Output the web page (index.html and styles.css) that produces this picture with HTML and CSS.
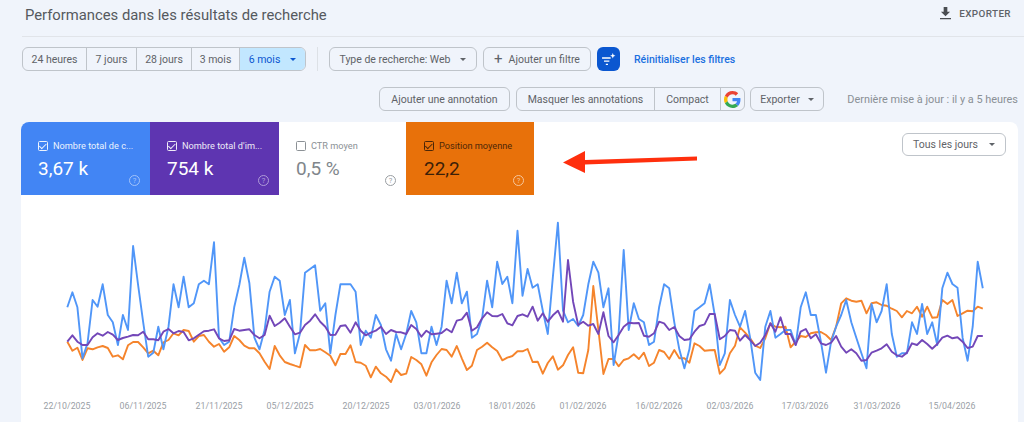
FILE: index.html
```html
<!DOCTYPE html>
<html lang="fr">
<head>
    <meta charset="UTF-8">
    <title>Performances dans les résultats de recherche</title>
    <link rel="stylesheet" href="styles.css">
</head>
<body>

    <div class="header">
        <div class="title">Performances dans les résultats de recherche</div>
        <div class="export-link">
            <svg class="export-icon" viewBox="0 0 12 14"><path d="M4 0h4v5h3L6 10 1 5h3zM0 12h12v1.4H0z"/></svg>
            EXPORTER
        </div>
    </div>

    <div class="filter-row">
        <div class="segmented">
            <div class="segment seg-24h">24 heures</div>
            <div class="segment seg-7j">7 jours</div>
            <div class="segment seg-28j">28 jours</div>
            <div class="segment seg-3m">3 mois</div>
            <div class="segment seg-6m active">6 mois <span class="caret"></span></div>
        </div>
        <div class="divider"></div>
        <div class="btn btn-type">Type de recherche: Web <span class="caret"></span></div>
        <div class="btn btn-add"><span class="plus">+</span> Ajouter un filtre</div>
        <div class="filter-icon-btn">
            <svg viewBox="0 0 14 14" width="15" height="15">
                <path d="M1 5h8v1.2H1zM2.8 8h5v1.2h-5zM4.5 11h2v1.2h-2z" fill="#fff"/>
                <path d="M11 1l.7 1.8 1.8.7-1.8.7-.7 1.8-.7-1.8-1.8-.7 1.8-.7z" fill="#fff"/>
            </svg>
        </div>
        <a class="reset-link">Réinitialiser les filtres</a>
    </div>

    <div class="annotation-row">
        <div class="btn btn-annotate">Ajouter une annotation</div>
        <div class="segmented">
            <div class="segment seg-hide">Masquer les annotations</div>
            <div class="segment seg-compact">Compact</div>
            <div class="segment seg-google">
                <svg viewBox="0 0 48 48" width="17" height="17">
                    <path fill="#EA4335" d="M24 9.5c3.5 0 6.7 1.2 9.2 3.6l6.9-6.9C35.9 2.4 30.5 0 24 0 14.6 0 6.5 5.4 2.6 13.2l8 6.2C12.5 13.6 17.800 9.500 24 9.500z"/>
                    <path fill="#4285F4" d="M46.500 24.500c0-1.600-.1-3.100-.4-4.500H24v9h12.700c-.5 2.900-2.200 5.400-4.700 7l7.700 6c4.500-4.200 6.800-10.300 6.800-17.500z"/>
                    <path fill="#FBBC05" d="M10.500 28.600c-.5-1.400-.8-3-.8-4.600s.3-3.200.8-4.600l-8-6.200C.9 16.500 0 20.100 0 24s.9 7.500 2.600 10.800z"/>
                    <path fill="#34A853" d="M24 48c6.500 0 11.900-2.100 15.900-5.800l-7.700-6c-2.200 1.400-4.900 2.300-8.200 2.300-6.200 0-11.500-4.200-13.400-9.800l-8 6.200C6.500 42.600 14.600 48 24 48z"/>
                </svg>
            </div>
        </div>
        <div class="btn btn-export">Exporter <span class="caret"></span></div>
        <div class="last-update">Dernière mise à jour : il y a 5 heures</div>
    </div>

    <div class="card">
        <div class="metrics-row">
            <div class="tile tile-blue">
                <div class="tile-label"><span class="checkbox checked"></span>Nombre total de c...</div>
                <div class="tile-value">3,67 k</div>
                <span class="help">?</span>
            </div>
            <div class="tile tile-purple">
                <div class="tile-label"><span class="checkbox checked"></span>Nombre total d'im...</div>
                <div class="tile-value">754 k</div>
                <span class="help">?</span>
            </div>
            <div class="tile tile-white">
                <div class="tile-label"><span class="checkbox"></span>CTR moyen</div>
                <div class="tile-value">0,5 %</div>
                <span class="help">?</span>
            </div>
            <div class="tile tile-orange">
                <div class="tile-label"><span class="checkbox checked"></span>Position moyenne</div>
                <div class="tile-value">22,2</div>
                <span class="help">?</span>
            </div>
            <svg class="arrow" viewBox="0 0 135 24" width="135" height="24">
                <path d="M0 12.500L22 1v9l112-3.500v4L22 14.500V23z" fill="#ff2f0d"/>
            </svg>
            <div class="btn btn-days">Tous les jours <span class="caret"></span></div>
        </div>

        <div class="chart">
            <svg id="chart" width="997" height="227" viewBox="0 0 997 227">
                <g class="tick-labels">
                    <text x="46" y="214">22/10/2025</text>
                    <text x="122" y="214">06/11/2025</text>
                    <text x="198" y="214">21/11/2025</text>
                    <text x="269" y="214">05/12/2025</text>
                    <text x="345" y="214">20/12/2025</text>
                    <text x="416" y="214">03/01/2026</text>
                    <text x="491" y="214">18/01/2026</text>
                    <text x="562" y="214">01/02/2026</text>
                    <text x="638" y="214">16/02/2026</text>
                    <text x="709" y="214">02/03/2026</text>
                    <text x="784" y="214">17/03/2026</text>
                    <text x="856" y="214">31/03/2026</text>
                    <text x="931" y="214">15/04/2026</text>
                </g>
            </svg>
        </div>
    </div>

    <script src="chart.js"></script>
</body>
</html>
```

FILE: styles.css
```css
* {
    box-sizing: border-box;
}
body {
    margin: 0;
    height: 422px;
    overflow: hidden;
    background-color: #f0f4fb;
    font-family: Roboto, "Liberation Sans", sans-serif;
    color: #5f6368;
}
.header {
    display: flex;
    justify-content: space-between;
    align-items: center;
    height: 37px;
    margin-left: 22px;
    padding: 0 13px 7px 3px;
    border-bottom: 1px solid #e1e4e9;
}
.title {
    font-size: 14.8px;
    color: #55595e;
}
.export-link {
    display: flex;
    align-items: center;
    gap: 8px;
    margin-top: -2px;
    font-size: 9.9px;
    font-weight: 500;
    letter-spacing: 0.4px;
}
.export-icon {
    width: 11px;
    height: 13px;
    fill: #4a4d51;
}
.filter-row {
    display: flex;
    align-items: center;
    height: 24px;
    margin: 10px 0 0 22px;
}
.annotation-row {
    display: flex;
    align-items: center;
    height: 24px;
    margin: 16px 6px 0 379px;
}
.segmented {
    display: flex;
    height: 24px;
    border: 1px solid #bfc4ca;
    border-radius: 6px;
    overflow: hidden;
    font-size: 10.5px;
}
.segment {
    display: flex;
    align-items: center;
    justify-content: center;
    gap: 7px;
    border-left: 1px solid #bfc4ca;
}
.segment:first-child {
    border-left: none;
}
.seg-24h { width: 63px; }
.seg-7j { width: 50px; }
.seg-28j { width: 55px; }
.seg-3m { width: 48px; }
.seg-6m { width: 66px; }
.seg-hide { width: 137px; }
.seg-compact { width: 66px; }
.seg-google { width: 24px; }
.active {
    background-color: #c2e7ff;
    color: #0b57d0;
}
.caret {
    display: inline-block;
    width: 0;
    height: 0;
    margin-left: 3px;
    border-left: 3px solid transparent;
    border-right: 3px solid transparent;
    border-top: 3px solid currentColor;
}
.divider {
    width: 1px;
    height: 24px;
    margin: 0 11px;
    background-color: #dde1e6;
}
.btn {
    display: flex;
    align-items: center;
    justify-content: center;
    height: 24px;
    border: 1px solid #bfc4ca;
    border-radius: 6px;
    font-size: 10.5px;
    gap: 5px;
}
.btn-type {
    width: 148px;
    gap: 7px;
}
.btn-add {
    width: 108px;
    margin-left: 6px;
    gap: 6px;
}
.plus {
    font-size: 15px;
    line-height: 1;
}
.filter-icon-btn {
    display: flex;
    align-items: center;
    justify-content: center;
    width: 23px;
    height: 24px;
    margin-left: 6px;
    border-radius: 6px;
    background-color: #0b57d0;
}
.reset-link {
    margin-left: 14px;
    font-size: 10.5px;
    font-weight: 500;
    color: #1a6fe0;
}
.btn-annotate {
    width: 131px;
    margin-right: 6px;
}
.btn-export {
    width: 74px;
    margin-left: 5px;
}
.last-update {
    margin-left: auto;
    font-size: 10.9px;
    color: #8a9096;
}
.card {
    height: 300px;
    margin: 11px 6px 0 21px;
    border-radius: 8px 8px 0 0;
    background-color: #fff;
}
.metrics-row {
    display: flex;
    align-items: flex-start;
    height: 73px;
}
.tile {
    position: relative;
    width: 128px;
    height: 73px;
    padding: 18px 0 0 17px;
}
.tile-blue {
    width: 129px;
    border-radius: 8px 0 0 0;
    background-color: #4285f4;
    color: #fff;
}
.tile-purple {
    width: 129px;
    background-color: #5e35b1;
    color: #fff;
}
.tile-white {
    width: 127px;
    color: #80868b;
}
.tile-orange {
    padding-left: 18px;
    background-color: #e8710a;
    color: #3c2008;
}
.tile-label {
    display: flex;
    align-items: center;
    gap: 5px;
    font-size: 9.2px;
    opacity: 0.9;
}
.tile-value {
    margin-top: 6px;
    font-size: 19px;
    line-height: 24px;
}
.checkbox {
    display: inline-block;
    position: relative;
    width: 10px;
    height: 10px;
    border: 1px solid currentColor;
    border-radius: 1.5px;
}
.checkbox.checked::after {
    content: "";
    position: absolute;
    left: 2px;
    top: 0.5px;
    width: 3px;
    height: 5.5px;
    border-right: 1px solid currentColor;
    border-bottom: 1px solid currentColor;
    transform: rotate(45deg);
}
.help {
    position: absolute;
    right: 10px;
    bottom: 9px;
    display: flex;
    align-items: center;
    justify-content: center;
    width: 11px;
    height: 11px;
    border: 1px solid currentColor;
    border-radius: 50%;
    font-size: 7.5px;
    opacity: 0.5;
}
.tile-white .help {
    opacity: 0.8;
}
.tile-orange .help {
    border-color: #f7c79c;
    color: #f7c79c;
    opacity: 1;
}
.arrow {
    flex: none;
    margin: 28px 0 0 29px;
}
.btn-days {
    width: 104px;
    height: 23px;
    margin: 11px 12px 0 auto;
    gap: 8px;
}
.chart {
    height: 227px;
}
.chart svg {
    display: block;
}
.tick-labels text {
    font-size: 8.8px;
    fill: #9aa0a6;
    text-anchor: middle;
}
.series {
    fill: none;
    stroke-width: 1.9;
    stroke-linejoin: round;
}
```

FILE: chart.js
```js
// y values are read off the chart at 3x scale, one per day
const blue = [292,247,292,445,400,270,290,223,315,337,405,315,360,108,225,337,440,428,350,418,350,223,292,200,292,280,223,212,223,97,383,405,395,292,225,143,220,383,418,360,245,200,212,315,270,430,370,188,177,166,302,280,430,315,
    223,223,223,245,405,362,383,315,345,418,452,372,418,372,303,337,430,430,350,405,350,212,280,188,280,245,383,372,325,212,292,155,222,200,280,62,257,177,233,223,302,372,200,38,302,337,327,348,315,223,155,188,292,235,465,372,120,360,280,327,337,405,395,292,223,235,337,
    418,475,418,303,292,280,223,315,465,430,270,315,350,303,383,488,510,350,303,383,372,360,360,405,292,247,315,315,395,488,395,350,315,270,337,383,430,475,282,337,303,223,372,440,430,430,337,372,282,372,337,405,235,188,222,233,383,452,350,155,235];

const purple = [395,376,395,405,405,382,370,377,366,374,390,384,380,375,376,365,388,388,391,365,357,370,363,366,391,385,374,364,362,358,385,393,391,357,362,360,358,375,385,375,317,348,338,325,350,373,368,345,332,313,335,350,375,374,
    348,346,368,337,362,376,368,362,350,372,360,366,367,372,345,357,380,362,373,371,369,357,367,332,328,308,362,352,325,307,318,319,312,340,346,318,313,320,290,332,310,335,316,302,335,150,275,345,335,347,342,372,307,378,397,375,350,338,340,339,377,380,370,335,340,360,351,
    378,390,388,365,348,343,312,312,388,378,360,362,392,375,390,408,398,375,340,365,322,372,372,405,365,357,385,373,400,405,398,378,410,428,418,430,452,450,428,422,415,403,425,436,440,428,400,405,390,402,416,402,383,377,385,382,395,414,410,378,378];

const orange = [395,422,413,450,415,418,412,408,414,440,436,448,406,396,396,412,430,422,436,397,390,370,376,360,363,395,378,375,395,410,402,425,412,378,390,407,415,415,430,455,477,408,436,456,462,467,472,405,421,421,417,427,437,466,
    432,432,406,456,458,467,502,470,490,500,516,478,495,491,441,450,463,497,457,435,417,420,440,408,445,480,467,420,410,398,412,423,451,443,438,424,424,417,456,455,491,459,439,479,466,435,412,488,490,420,228,360,492,447,447,469,450,445,433,447,428,468,458,420,426,447,420,
    445,445,458,400,408,422,421,420,491,475,430,407,352,368,385,407,414,385,340,350,352,350,412,395,378,381,370,367,366,375,390,350,280,265,272,275,272,310,280,277,285,287,296,303,322,303,310,290,320,290,323,322,270,282,270,318,310,302,304,290,296];

function drawSeries(values, color) {
    const svg = document.getElementById('chart');
    const line = document.createElementNS('http://www.w3.org/2000/svg', 'polyline');
    const points = values.map((v, i) => {
        const x = 46.3 + i * 5.058;
        const y = 15 + v / 3;
        return x.toFixed(1) + ',' + y.toFixed(1);
    });
    line.setAttribute('points', points.join(' '));
    line.setAttribute('class', 'series');
    line.setAttribute('stroke', color);
    svg.appendChild(line);
}

drawSeries(orange, '#f5842c');
drawSeries(blue, '#5096f8');
drawSeries(purple, '#7347b8');
```
